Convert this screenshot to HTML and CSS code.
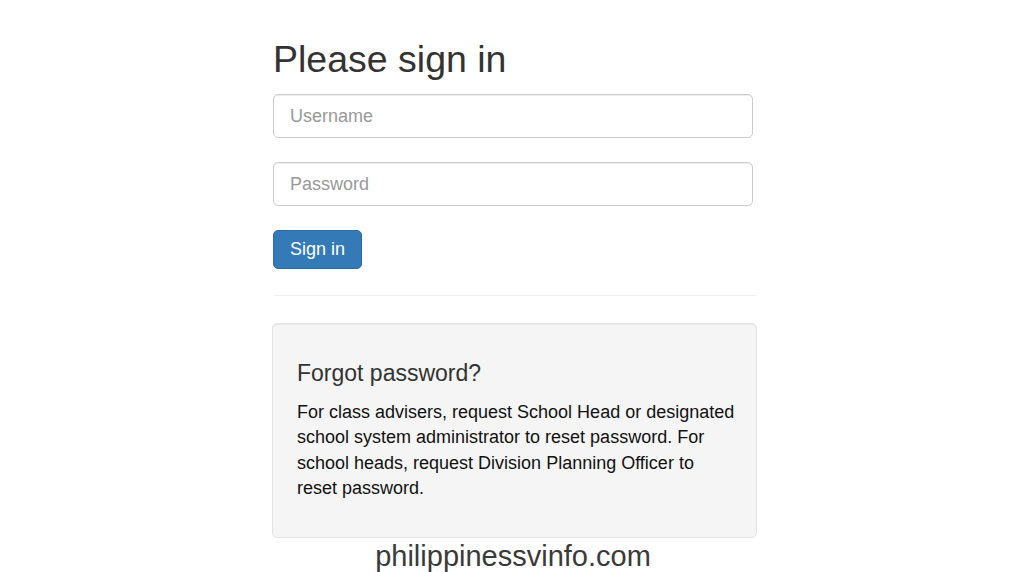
FILE: index.html
```html
<!DOCTYPE html>
<html lang="en">
<head>
<meta charset="utf-8">
<title>Please sign in</title>
<link rel="stylesheet" href="styles.css">
</head>
<body>
<main class="container">
  <form class="signin">
    <h2 class="signin-heading">Please sign in</h2>
    <input class="field" type="text" placeholder="Username">
    <input class="field" type="password" placeholder="Password">
    <button class="btn" type="button">Sign in</button>
  </form>
  <hr class="divider">
  <section class="well">
    <h4 class="well-title">Forgot password?</h4>
    <p class="well-text">For class advisers, request School Head or designated school system administrator to reset password. For school heads, request Division Planning Officer to reset password.</p>
  </section>
</main>
<footer class="watermark">philippinessvinfo.com</footer>
</body>
</html>
```

FILE: styles.css
```css
html, body {
  margin: 0;
  padding: 0;
  background: #ffffff;
  overflow: hidden;
  height: 572px;
}
body {
  font-family: "Liberation Sans", Arial, Helvetica, sans-serif;
  color: #333333;
}
.container {
  width: 485px;
  margin-left: 272px;
  padding-top: 39px;
}
.signin {
  display: flex;
  flex-direction: column;
  align-items: flex-start;
  margin: 0;
}
.signin-heading {
  font-size: 37.5px;
  font-weight: 400;
  line-height: 1.1;
  margin: 0 0 14px 1px;
  color: #333333;
}
.field {
  box-sizing: border-box;
  width: 480px;
  height: 44px;
  margin: 0 0 24px 1px;
  padding: 0 16px;
  font-family: inherit;
  font-size: 18px;
  color: #555555;
  background: #ffffff;
  border: 1px solid #cccccc;
  border-radius: 5px;
  box-shadow: inset 0 1px 1px rgba(0, 0, 0, 0.075);
  outline: none;
}
.field::placeholder {
  color: #999999;
}
.btn {
  box-sizing: border-box;
  height: 39px;
  margin-left: 1px;
  padding: 0 16px;
  font-family: inherit;
  font-size: 18px;
  color: #ffffff;
  background: #337ab7;
  border: 1px solid #2e6da4;
  border-radius: 5px;
  cursor: pointer;
}
.divider {
  border: 0;
  border-top: 1px solid #eeeeee;
  margin: 26px 1px 27px 3px;
}
.well {
  box-sizing: border-box;
  width: 485px;
  height: 215px;
  padding: 24px 21px 24px 24px;
  background: #f5f5f5;
  border: 1px solid #e3e3e3;
  border-radius: 5px;
  box-shadow: inset 0 1px 1px rgba(0, 0, 0, 0.05);
}
.well-title {
  font-size: 23px;
  font-weight: 400;
  line-height: 1.1;
  margin: 13px 0 13.5px 0;
  color: #333333;
}
.well-text {
  font-size: 18px;
  line-height: 25.3px;
  margin: 0;
  color: #111111;
}
.watermark {
  text-align: center;
  font-size: 29px;
  line-height: 32px;
  color: #3a3a3a;
  margin-top: 2px;
  padding-left: 2px;
}
```
